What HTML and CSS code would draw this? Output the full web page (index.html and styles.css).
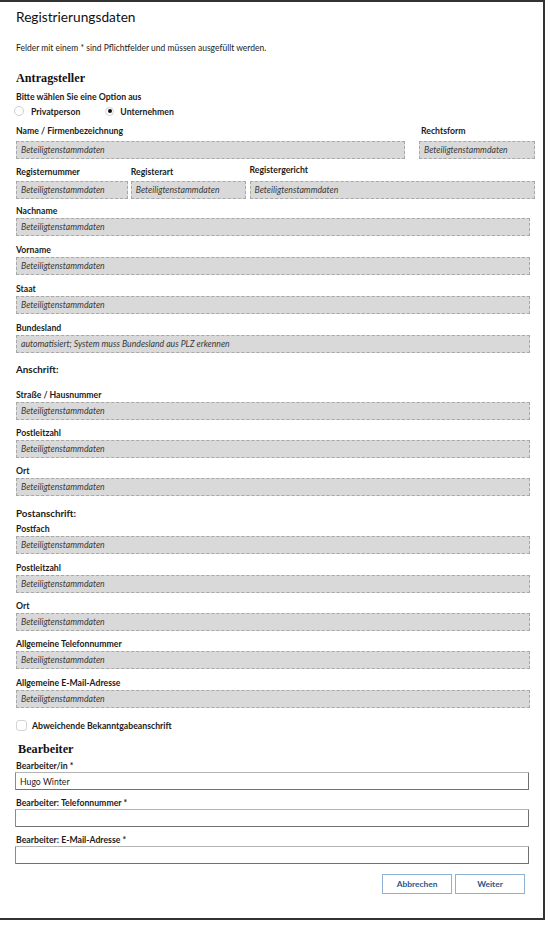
FILE: index.html
```html
<!DOCTYPE html>
<html lang="de">
<head>
<meta charset="utf-8">
<title>Registrierungsdaten</title>
<link rel="stylesheet" href="styles.css">
</head>
<body>
<div class="frame">
  <h1 class="title">Registrierungsdaten</h1>
  <p class="hint">Felder mit einem * sind Pflichtfelder und müssen ausgefüllt werden.</p>

  <h2 class="section">Antragsteller</h2>
  <p class="prompt">Bitte wählen Sie eine Option aus</p>
  <div class="radios">
    <span class="radio"></span><span class="radio-label">Privatperson</span>
    <span class="radio radio-on"></span><span class="radio-label">Unternehmen</span>
  </div>

  <div class="row row-name">
    <div class="cell cell-name">
      <div class="label">Name / Firmenbezeichnung</div>
      <div class="ro">Beteiligtenstammdaten</div>
    </div>
    <div class="cell cell-form">
      <div class="label">Rechtsform</div>
      <div class="ro">Beteiligtenstammdaten</div>
    </div>
  </div>

  <div class="row row-reg">
    <div class="cell cell-nr">
      <div class="label">Registernummer</div>
      <div class="ro">Beteiligtenstammdaten</div>
    </div>
    <div class="cell cell-art">
      <div class="label">Registerart</div>
      <div class="ro">Beteiligtenstammdaten</div>
    </div>
    <div class="cell cell-ger">
      <div class="label">Registergericht</div>
      <div class="ro">Beteiligtenstammdaten</div>
    </div>
  </div>

  <div class="group g-nachname">
    <div class="label">Nachname</div>
    <div class="ro full">Beteiligtenstammdaten</div>
  </div>
  <div class="group g-std">
    <div class="label">Vorname</div>
    <div class="ro full">Beteiligtenstammdaten</div>
  </div>
  <div class="group g-std">
    <div class="label">Staat</div>
    <div class="ro full">Beteiligtenstammdaten</div>
  </div>
  <div class="group g-std">
    <div class="label">Bundesland</div>
    <div class="ro full">automatisiert; System muss Bundesland aus PLZ erkennen</div>
  </div>

  <div class="subhead sh-anschrift">Anschrift:</div>
  <div class="group g-first">
    <div class="label">Straße / Hausnummer</div>
    <div class="ro full">Beteiligtenstammdaten</div>
  </div>
  <div class="group g-7">
    <div class="label">Postleitzahl</div>
    <div class="ro full">Beteiligtenstammdaten</div>
  </div>
  <div class="group g-7">
    <div class="label">Ort</div>
    <div class="ro full">Beteiligtenstammdaten</div>
  </div>

  <div class="subhead sh-post">Postanschrift:</div>
  <div class="group g-postfach">
    <div class="label">Postfach</div>
    <div class="ro full">Beteiligtenstammdaten</div>
  </div>
  <div class="group g-std">
    <div class="label">Postleitzahl</div>
    <div class="ro full">Beteiligtenstammdaten</div>
  </div>
  <div class="group g-7">
    <div class="label">Ort</div>
    <div class="ro full">Beteiligtenstammdaten</div>
  </div>
  <div class="group g-7">
    <div class="label">Allgemeine Telefonnummer</div>
    <div class="ro full">Beteiligtenstammdaten</div>
  </div>
  <div class="group g-std">
    <div class="label">Allgemeine E-Mail-Adresse</div>
    <div class="ro full">Beteiligtenstammdaten</div>
  </div>

  <div class="check-row">
    <span class="checkbox"></span><span class="check-label">Abweichende Bekanntgabeanschrift</span>
  </div>

  <h2 class="section section-b">Bearbeiter</h2>
  <div class="group g-b1">
    <div class="label label-b">Bearbeiter/in *</div>
    <input class="inp" type="text" value="Hugo Winter">
  </div>
  <div class="group g-b">
    <div class="label label-b">Bearbeiter: Telefonnummer *</div>
    <input class="inp" type="text" value="">
  </div>
  <div class="group g-b">
    <div class="label label-b">Bearbeiter: E-Mail-Adresse *</div>
    <input class="inp" type="text" value="">
  </div>

  <div class="buttons">
    <button class="btn" type="button">Abbrechen</button>
    <button class="btn" type="button">Weiter</button>
  </div>
</div>
</body>
</html>
```

FILE: styles.css
```css
html, body {
  margin: 0;
  padding: 0;
  background: #ffffff;
}

body {
  font-family: Lato, "Open Sans", "Liberation Sans", sans-serif;
  color: #1c1c1c;
}

.frame {
  box-sizing: border-box;
  width: 545px;
  height: 920px;
  border-top: 2px solid #333333;
  border-right: 2px solid #333333;
  border-bottom: 2px solid #333333;
  padding: 0 0 0 16px;
  overflow: hidden;
}

.title {
  margin: 6px 0 0;
  font-size: 13.7px;
  line-height: 18px;
  font-weight: 400;
  color: #111111;
}

.hint {
  margin: 17px 0 0;
  font-size: 8.5px;
  line-height: 10px;
  color: #222222;
}

.section {
  margin: 17px 0 0;
  font-family: "Liberation Serif", "DejaVu Serif", serif;
  font-size: 12.2px;
  line-height: 16px;
  font-weight: 700;
  color: #111111;
}

.prompt {
  margin: 6px 0 0;
  font-size: 8.7px;
  line-height: 10px;
  font-weight: 700;
}

.radios {
  margin-top: 3px;
  height: 12px;
  display: flex;
  align-items: center;
  margin-left: -2px;
}

.radio {
  box-sizing: border-box;
  width: 10px;
  height: 10px;
  border-radius: 50%;
  border: 1px solid #cfcfcf;
  background: #ffffff;
  position: relative;
}

.radio-on {
  width: 9px;
  height: 9px;
  border-color: #d0d0d0;
}

.radio-on::after {
  content: "";
  position: absolute;
  left: 1.5px;
  top: 1.5px;
  width: 4px;
  height: 4px;
  border-radius: 50%;
  background: #111111;
}

.radio-label {
  font-size: 8.7px;
  font-weight: 700;
  margin-left: 7px;
  margin-right: 25px;
}

.radio-on + .radio-label {
  margin-left: 6px;
}

.label {
  font-size: 8.7px;
  line-height: 12px;
  height: 12px;
  font-weight: 700;
  white-space: nowrap;
  margin-bottom: 1px;
  color: #1c1c1c;
}

.ro {
  box-sizing: border-box;
  height: 18px;
  line-height: 16px;
  background: #d9d9d9;
  border: 1px dashed #a8a8a8;
  padding-left: 4px;
  font-size: 8.7px;
  font-style: italic;
  color: #3a3a3a;
  white-space: nowrap;
  overflow: hidden;
}

.full {
  width: 514px;
}

.row {
  display: flex;
  width: 519px;
}

.row-name {
  margin-top: 8px;
  gap: 14px;
}

.row-name .label {
  margin-bottom: 4px;
}

.cell-name {
  width: 389px;
}

.cell-form {
  width: 116px;
}

.cell-form .label {
  padding-left: 2px;
}

.row-reg {
  margin-top: 7px;
  gap: 3px;
}

.row-reg .label {
  margin-bottom: 3px;
}

.cell-nr {
  width: 112px;
}

.cell-art {
  width: 115px;
}

.cell-ger {
  width: 286px;
  margin-left: 1px;
}

.cell-ger .label {
  position: relative;
  top: -2px;
}

.group {
  margin-top: 8px;
}

.g-nachname {
  margin-top: 6px;
}

.g-std {
  margin-top: 8px;
}

.g-7 {
  margin-top: 7px;
}

.g-first {
  margin-top: 14px;
}

.g-postfach {
  margin-top: 4px;
}

.subhead {
  font-size: 9.8px;
  line-height: 12px;
  font-weight: 700;
  color: #1c1c1c;
}

.sh-anschrift {
  margin-top: 10px;
}

.sh-post {
  margin-top: 11px;
}

.check-row {
  margin-top: 11px;
  height: 12px;
  display: flex;
  align-items: center;
}

.checkbox {
  box-sizing: border-box;
  width: 11px;
  height: 11px;
  border: 1px solid #d4d4d4;
  border-radius: 3px;
  background: #ffffff;
}

.check-label {
  margin-left: 5px;
  font-size: 8.7px;
  font-weight: 700;
}

.section-b {
  margin-top: 10px;
  padding-left: 2px;
}

.g-b1 {
  margin-top: 3px;
}

.g-b {
  margin-top: 7px;
}

.label-b {
  margin-bottom: 0;
}

.inp {
  display: block;
  box-sizing: border-box;
  margin: 0 0 0 -1px;
  width: 514px;
  height: 18px;
  padding: 0 0 0 4px;
  border: 1px solid #707070;
  border-top-color: #b4b4b4;
  border-left-color: #8a8a8a;
  border-radius: 1px;
  background: #ffffff;
  font-family: Lato, "Open Sans", "Liberation Sans", sans-serif;
  font-size: 8.7px;
  color: #1c1c1c;
  outline: none;
}

.buttons {
  margin-top: 10px;
  width: 509px;
  display: flex;
  justify-content: flex-end;
  gap: 3px;
}

.btn {
  box-sizing: border-box;
  width: 70px;
  height: 20px;
  margin: 0;
  padding: 0;
  border: 1px solid #8fb2d4;
  background: #ffffff;
  font-family: Lato, "Open Sans", "Liberation Sans", sans-serif;
  font-size: 8.4px;
  font-weight: 700;
  color: #27568a;
}
```
